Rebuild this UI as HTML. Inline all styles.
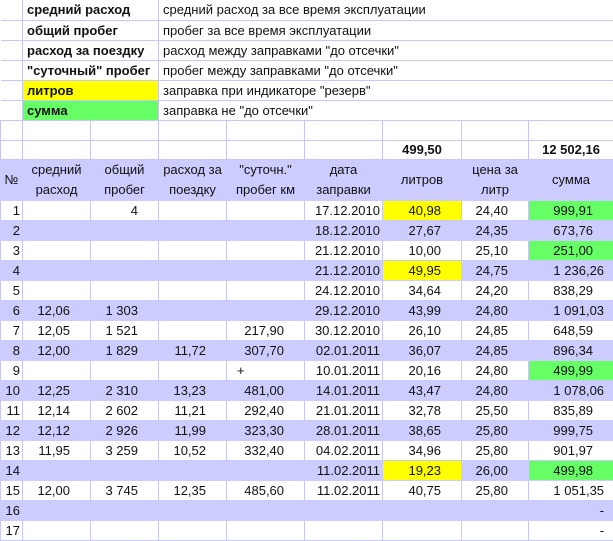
<!DOCTYPE html>
<html><head><meta charset="utf-8"><style>
body{margin:0;background:#fff;width:613px;height:539px;overflow:hidden;font-family:"Liberation Sans",sans-serif;font-size:13px;color:#111;}
table{border-collapse:collapse;table-layout:fixed;width:613px;margin-top:-1px;}
td{padding:0;border:1px solid #c8c8f4;white-space:nowrap;overflow:visible;line-height:18px;}
tr{height:20px;}
.b{font-weight:bold;}
.l{padding-left:4px;}
.y{background:#ffff00;}
.g{background:#66ff66;}
.lav td{background:#ccccff;border-color:#ccccff;}
.lav td.y{background:#ffff00;}
.lav td.g{background:#66ff66;}
.n{text-align:right;padding-right:2px;}
.r{text-align:right;padding-right:20px;}
.r2{text-align:right;padding-right:9px;}
.d{text-align:right;padding-right:2px;}
.hd td{background:#ccccff;border-color:#ccccff;text-align:center;line-height:20px;}
.top td{border-left:none;border-right:none;}
.top td.s{border-left:1px solid #c8c8f4;}
</style></head><body>
<table>
<colgroup><col style="width:22px"><col style="width:68px"><col style="width:68px"><col style="width:68px"><col style="width:78px"><col style="width:78px"><col style="width:79px"><col style="width:67px"><col style="width:85px"></colgroup>
<tr class="top" style="height:21px"><td></td><td colspan="2" class="b l s">средний расход</td><td colspan="6" class="l s">средний расход за все время эксплуатации</td></tr>
<tr class="top"><td></td><td colspan="2" class="b l s">общий пробег</td><td colspan="6" class="l s">пробег за все время эксплуатации</td></tr>
<tr class="top"><td></td><td colspan="2" class="b l s">расход за поездку</td><td colspan="6" class="l s">расход между заправками "до отсечки"</td></tr>
<tr class="top"><td></td><td colspan="2" class="b l s">"суточный" пробег</td><td colspan="6" class="l s">пробег между заправками "до отсечки"</td></tr>
<tr class="top"><td></td><td colspan="2" class="b l s y">литров</td><td colspan="6" class="l s">заправка при индикаторе "резерв"</td></tr>
<tr class="top"><td></td><td colspan="2" class="b l s g">сумма</td><td colspan="6" class="l s">заправка не "до отсечки"</td></tr>
<tr><td></td><td></td><td></td><td></td><td></td><td></td><td></td><td></td><td></td></tr>
<tr style="height:19px"><td></td><td></td><td></td><td></td><td></td><td></td><td class="b" style="text-align:center">499,50</td><td></td><td class="b" style="text-align:center">12 502,16</td></tr>
<tr class="hd" style="height:40px"><td>№</td><td>средний<br>расход</td><td>общий<br>пробег</td><td>расход за<br>поездку</td><td>"суточн."<br>пробег км</td><td>дата<br>заправки</td><td>литров</td><td>цена за<br>литр</td><td>сумма</td></tr>
<tr><td class="n">1</td><td></td><td class="r">4</td><td></td><td></td><td class="d">17.12.2010</td><td class="r y">40,98</td><td class="r">24,40</td><td class="r g">999,91</td></tr>
<tr class="lav"><td class="n">2</td><td></td><td></td><td></td><td></td><td class="d">18.12.2010</td><td class="r">27,67</td><td class="r">24,35</td><td class="r">673,76</td></tr>
<tr><td class="n">3</td><td></td><td></td><td></td><td></td><td class="d">21.12.2010</td><td class="r">10,00</td><td class="r">25,10</td><td class="r g">251,00</td></tr>
<tr class="lav"><td class="n">4</td><td></td><td></td><td></td><td></td><td class="d">21.12.2010</td><td class="r y">49,95</td><td class="r">24,75</td><td class="r2">1 236,26</td></tr>
<tr><td class="n">5</td><td></td><td></td><td></td><td></td><td class="d">24.12.2010</td><td class="r">34,64</td><td class="r">24,20</td><td class="r">838,29</td></tr>
<tr class="lav"><td class="n">6</td><td class="r">12,06</td><td class="r">1 303</td><td></td><td></td><td class="d">29.12.2010</td><td class="r">43,99</td><td class="r">24,80</td><td class="r2">1 091,03</td></tr>
<tr><td class="n">7</td><td class="r">12,05</td><td class="r">1 521</td><td></td><td class="r">217,90</td><td class="d">30.12.2010</td><td class="r">26,10</td><td class="r">24,85</td><td class="r">648,59</td></tr>
<tr class="lav"><td class="n">8</td><td class="r">12,00</td><td class="r">1 829</td><td class="r">11,72</td><td class="r">307,70</td><td class="d">02.01.2011</td><td class="r">36,07</td><td class="r">24,85</td><td class="r">896,34</td></tr>
<tr><td class="n">9</td><td></td><td></td><td></td><td style="padding-left:10px">+</td><td class="d">10.01.2011</td><td class="r">20,16</td><td class="r">24,80</td><td class="r g">499,99</td></tr>
<tr class="lav"><td class="n">10</td><td class="r">12,25</td><td class="r">2 310</td><td class="r">13,23</td><td class="r">481,00</td><td class="d">14.01.2011</td><td class="r">43,47</td><td class="r">24,80</td><td class="r2">1 078,06</td></tr>
<tr><td class="n">11</td><td class="r">12,14</td><td class="r">2 602</td><td class="r">11,21</td><td class="r">292,40</td><td class="d">21.01.2011</td><td class="r">32,78</td><td class="r">25,50</td><td class="r">835,89</td></tr>
<tr class="lav"><td class="n">12</td><td class="r">12,12</td><td class="r">2 926</td><td class="r">11,99</td><td class="r">323,30</td><td class="d">28.01.2011</td><td class="r">38,65</td><td class="r">25,80</td><td class="r">999,75</td></tr>
<tr><td class="n">13</td><td class="r">11,95</td><td class="r">3 259</td><td class="r">10,52</td><td class="r">332,40</td><td class="d">04.02.2011</td><td class="r">34,96</td><td class="r">25,80</td><td class="r">901,97</td></tr>
<tr class="lav"><td class="n">14</td><td></td><td></td><td></td><td></td><td class="d">11.02.2011</td><td class="r y">19,23</td><td class="r">26,00</td><td class="r g">499,98</td></tr>
<tr><td class="n">15</td><td class="r">12,00</td><td class="r">3 745</td><td class="r">12,35</td><td class="r">485,60</td><td class="d">11.02.2011</td><td class="r">40,75</td><td class="r">25,80</td><td class="r2">1 051,35</td></tr>
<tr class="lav"><td class="n">16</td><td></td><td></td><td></td><td></td><td></td><td></td><td></td><td class="r2">-</td></tr>
<tr><td class="n">17</td><td></td><td></td><td></td><td></td><td></td><td></td><td></td><td class="r2">-</td></tr>
</table>
</body></html>
